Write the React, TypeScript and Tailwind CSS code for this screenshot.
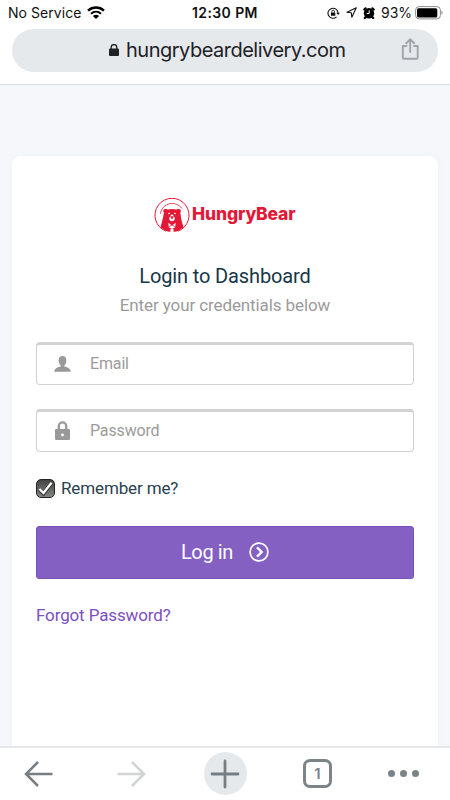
import React, { useState } from 'react';

interface FieldProps {
  type: string;
  placeholder: string;
  className?: string;
  icon: React.ReactNode;
}

const WifiIcon = () => (
  <svg className="w-[18px] h-[13px] shrink-0" viewBox="0 0 18 13" fill="none" stroke="#000">
    <path d="M1 4.6C5.5.4 12.500.4 17 4.600" strokeWidth="2.400" />
    <path d="M4 7.700c2.900-2.600 7.100-2.600 10 0" strokeWidth="2.200" />
    <path d="M9 13 5.900 9.900c1.700-1.500 4.500-1.500 6.200 0Z" fill="#000" stroke="none" />
  </svg>
);

const RotationLockIcon = () => (
  <svg className="w-[13px] h-3 shrink-0" viewBox="0 0 13 12" fill="none" stroke="#111">
    <path d="M9.500 9.800A5 5 0 1 1 11 6" strokeWidth="1.100" />
    <path d="M9.300 5.700h3.600L11.100 8Z" fill="#111" stroke="none" />
    <rect x="3.900" y="5.500" width="4.400" height="3.300" rx=".4" fill="#111" stroke="none" />
    <path d="M4.800 5.600V4.500a1.300 1.300 0 0 1 2.600 0v1.100" strokeWidth=".9" />
  </svg>
);

const LocationIcon = () => (
  <svg className="w-[11px] h-[11px] shrink-0" viewBox="0 0 11 11" fill="none" stroke="#111" strokeWidth="1.100" strokeLinejoin="round">
    <path d="M10.300.7.9 5.200l4.400.6.500 4.400Z" />
  </svg>
);

const AlarmIcon = () => (
  <svg className="w-3 h-3 shrink-0" viewBox="0 0 12 12">
    <circle cx="6" cy="6.200" r="5.200" fill="#000" />
    <path d="M1.300 2.500 2.600 1.300M10.700 2.500 9.400 1.300M2.500 10.200l-.7.800M9.500 10.200l.7.800" stroke="#000" strokeWidth="2.200" strokeLinecap="round" />
    <path d="M6.200 3.400v3.100H3.700" stroke="#fff" strokeWidth="1" fill="none" />
  </svg>
);

const BatteryIcon = () => (
  <svg className="w-[28px] h-[14px] shrink-0" viewBox="0 0 28 14">
    <rect x=".6" y=".6" width="24.800" height="12.300" rx="3.500" fill="none" stroke="#8b8b8b" strokeWidth="1" />
    <rect x="2" y="2.200" width="20.300" height="9.200" rx="1.500" fill="#000" />
    <path d="M26.500 4.700v4.100c1.500-.5 1.500-3.600 0-4.100Z" fill="#8b8b8b" />
  </svg>
);

// Badge with the bear standing inside a thin ring
const BearMark = () => (
  <svg className="w-9 h-[35px] shrink-0" viewBox="0 0 36 35" fill="none">
    <path d="M12 33.200A17 17 0 1 1 24 33.200" stroke="#e31837" strokeWidth="1" />
    <path d="M6.500 15.800C8.200 4.300 22 2.200 28 10.500" stroke="#e31837" strokeWidth=".8" />
    <path
      d="M9.400 13.600c-.5-1.900.6-3.100 2.700-2.600.6.100 1 .3 1.400.6 2.900-.7 6.200-.7 9.100 0 .4-.3.800-.5 1.400-.6 2.100-.5 3.200.7 2.700 2.600-.1.500-.2.900-.4 1.200.6 3.100.8 6.800 1.800 9.600.6 1.700 1.200 3.600 1.400 5.200l-5.100 3.200c-1.900 1-4.100 1.300-5.300.9L18 31l-1.100 2.700c-1.300.4-3.400.1-5.300-.9L6.500 29.600c.2-1.600.7-3.500 1.300-5.200 1-2.800 1.400-6.500 2.200-9.600-.3-.3-.5-.7-.6-1.200Z"
      fill="#e31837"
    />
    <path d="M14.200 15.800 16 15.200M21.800 15.800 20 15.200" stroke="#fff" strokeWidth="1" />
    <path d="M18 16.500c-1.300 0-1.500 1.600-2.300 2.500-1 1.300-.6 3.900 2.300 4.300 2.900-.4 3.300-3 2.300-4.300-.8-.9-1-2.500-2.300-2.500Z" fill="#fff" />
    <path d="M16.400 18.600h3.200L18 20.700ZM18 20v1.800" fill="#e31837" stroke="#e31837" strokeWidth=".6" />
    <path d="m14.300 24.800 3.700 2.800 3.700-2.800-.6 4.600-3.100 1-3.100-1Z" fill="#fff" />
    <path d="m15.300 28.600 2.700-1.700 2.700 1.700" stroke="#e31837" strokeWidth=".8" />
    <path d="M16.700 30.500h2.600l.5 3.200h-3.600Z" fill="#fff" />
  </svg>
);

const UserIcon = () => (
  <svg className="w-[17px] h-4" viewBox="0 0 17 16" fill="#999">
    <path d="M8.500 0c2.400 0 3.900 1.600 3.900 4.200 0 2.200-.8 4.200-2.100 5.100v1.300c2.700.7 6.200 1.600 6.500 5.100H.2c.3-3.500 3.800-4.400 6.500-5.100V9.300C5.400 8.400 4.600 6.400 4.600 4.200 4.600 1.600 6.100 0 8.500 0Z" />
  </svg>
);

const LockIcon = () => (
  <svg className="w-[15px] h-[19px]" viewBox="0 0 15 19" fill="none">
    <path d="M3.800 9V5.100a3.700 3.700 0 0 1 7.400 0V9" stroke="#999" strokeWidth="2.300" />
    <rect y="8" width="15" height="11" rx="1.300" fill="#999" />
    <circle cx="7.500" cy="14" r="1.400" fill="#fff" />
  </svg>
);

const Field: React.FC<FieldProps> = ({ type, placeholder, className = '', icon }) => (
  <label className={`${className} flex items-center h-[43px] rounded-[4px] border border-[#d2d2d2] border-t-[3px] pb-0.5 bg-white`}>
    <span className="w-[51px] flex justify-center shrink-0">{icon}</span>
    <input
      type={type}
      placeholder={placeholder}
      className="flex-1 min-w-0 ml-0.5 outline-none text-base tracking-[-0.15px] text-gray-700 placeholder:text-[#9b9b9b]"
    />
  </label>
);

const StatusBar = () => (
  <div className="flex items-center h-[25px] pl-2 text-[14px] leading-[25px] text-[#111] whitespace-nowrap font-['Inter',sans-serif]">
    <span className="w-[79px] tracking-[0.05px]">No Service</span>
    <WifiIcon />
    <span className="ml-[87px] w-[135px] font-semibold tracking-[0.4px]">12:30 PM</span>
    <RotationLockIcon />
    <span className="ml-1.5"><LocationIcon /></span>
    <span className="ml-1.5"><AlarmIcon /></span>
    <span className="ml-1.5 w-[34px]">93%</span>
    <BatteryIcon />
  </div>
);

const AddressBar = () => (
  <div className="h-[60px] px-3 pt-1 border-b border-[#d9dadd]">
    <div className="flex items-center h-[43px] rounded-full bg-[#e6e9ec]">
      <svg className="w-[10px] h-3 ml-[97px] mb-0.5 shrink-0" viewBox="0 0 10 12" fill="none">
        <path d="M2.200 6V3.400a2.800 2.800 0 0 1 5.600 0V6" stroke="#202124" strokeWidth="1.300" />
        <rect y="4.600" width="10" height="7.400" rx="1.100" fill="#202124" />
      </svg>
      <span className="ml-[7px] w-[261px] text-[20px] leading-[42px] tracking-[-0.5px] pb-px text-[#202124] whitespace-nowrap font-['Inter',sans-serif]">hungrybeardelivery.com</span>
      <svg className="w-[19px] h-[22px] ml-[14px] mb-[3px] shrink-0" viewBox="0 0 19 22" fill="none" stroke="#a0a5aa" strokeWidth="1.900" strokeLinecap="round">
        <path d="M5.500 8H1.800v11.700q0 1 1 1h12.900q1 0 1-1V8H13" strokeLinejoin="round" />
        <path d="M9.200 14V1.500M5.200 5.200l4-3.900 4 3.900" />
      </svg>
    </div>
  </div>
);

const BottomBar = () => (
  <nav className="grid grid-cols-[76px_111px_76px_109px_62px] items-center h-[54px] pb-px border-t-2 border-[#e6e7e9] bg-white">
    <button className="flex justify-center" aria-label="Back">
      <svg className="w-[30px] h-[28px]" viewBox="0 0 30 28" fill="none" stroke="#777e83" strokeWidth="2.500">
        <path d="M29.500 14H3M15 2 3 14l12 12" />
      </svg>
    </button>
    <button className="flex justify-center" aria-label="Forward">
      <svg className="w-[30px] h-[28px]" viewBox="0 0 30 28" fill="none" stroke="#d2d3d4" strokeWidth="2.500">
        <path d="M.5 14H27M15 2l12 12-12 12" />
      </svg>
    </button>
    <button className="flex items-center justify-center justify-self-center w-[43px] h-[43px] rounded-full bg-[#e6e9ec]" aria-label="New tab">
      <svg className="w-[30px] h-[30px]" viewBox="0 0 30 30" stroke="#777e83" strokeWidth="2.800" strokeLinecap="round">
        <path d="M15 2v26M2 15h26" />
      </svg>
    </button>
    <button className="flex items-center justify-center justify-self-center w-[29px] h-[29px] rounded-[7px] border-[3px] border-[#7c8488] text-[15px] font-semibold leading-none text-[#7c8488] font-['Inter',sans-serif]">
      1
    </button>
    <button className="flex justify-center gap-[5px]" aria-label="More">
      <span className="w-[7px] h-[7px] rounded-full bg-[#7c8488]" />
      <span className="w-[7px] h-[7px] rounded-full bg-[#7c8488]" />
      <span className="w-[7px] h-[7px] rounded-full bg-[#7c8488]" />
    </button>
  </nav>
);

const App: React.FC = () => {
  const [remember, setRemember] = useState(true);

  return (
    <div className="flex flex-col h-[800px] w-[450px] overflow-hidden bg-white font-['Roboto',sans-serif]">
      <StatusBar />
      <AddressBar />

      <main className="flex-1 min-h-0 bg-[#f6f7fb] px-3 pt-[71px] overflow-hidden">
        <div className="h-full rounded-t-[9px] bg-white px-6 pt-[41px] shadow-[0_0_8px_rgba(0,0,0,0.03)]">
          <div className="flex items-center h-9 pl-[118px]">
            <BearMark />
            <span className="ml-0.5 pb-[3px] text-[17.5px] leading-6 font-extrabold tracking-[-0.15px] text-[#e31837] whitespace-nowrap font-['Inter',sans-serif]">HungryBear</span>
          </div>

          <h1 className="mt-[29px] text-center text-[20px] leading-7 tracking-[-0.13px] text-[#173647]">Login to Dashboard</h1>
          <p className="mt-px text-center text-[17px] leading-7 tracking-[-0.1px] text-[#9b9b9b]">Enter your credentials below</p>

          <Field type="email" placeholder="Email" className="mt-[23px]" icon={<UserIcon />} />
          <Field type="password" placeholder="Password" className="mt-6" icon={<LockIcon />} />

          <label className="flex items-center mt-6 h-6">
            <input type="checkbox" className="sr-only" checked={remember} onChange={() => setRemember(!remember)} />
            <span className="w-[19px] h-[19px] rounded-[5px] border border-[#222] bg-linear-to-b from-[#444] to-[#858585]">
              {remember && (
                <svg className="w-[17px] h-[17px]" viewBox="0 0 17 17" fill="none">
                  <path d="m2.500 9.500 4 4L14.500 3" stroke="#333" strokeWidth="3.800" />
                  <path d="m2.500 9 4 4L14.500 2.800" stroke="#fff" strokeWidth="2.300" />
                </svg>
              )}
            </span>
            <span className="ml-1.5 pt-px text-[17px] tracking-[-0.13px] text-[#29424f]">Remember me?</span>
          </label>

          <button className="mt-[26px] w-full h-[53px] flex items-center pl-[144px] pb-0.5 rounded-[3px] border border-[#7a51bb] bg-[#8460c2] text-white text-[20px] tracking-[-0.4px]">
            Log in
            <svg className="w-5 h-5 ml-4" viewBox="0 0 20 20" fill="none" stroke="#fff">
              <circle cx="10" cy="10" r="8.900" strokeWidth="1.700" />
              <path d="m8 5.400 4.600 4.600L8 14.600" strokeWidth="2.400" />
            </svg>
          </button>

          <a href="#" className="inline-block mt-6 text-[17px] leading-6 tracking-[-0.13px] text-[#7b4fc0]">Forgot Password?</a>
        </div>
      </main>

      <BottomBar />
    </div>
  );
};

export default App;
